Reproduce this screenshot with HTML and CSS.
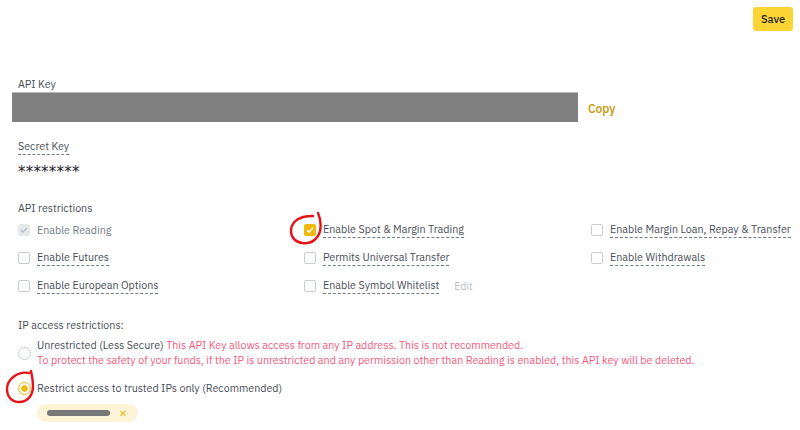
FILE: index.html
```html
<!DOCTYPE html>
<html lang="en">
<head>
    <meta charset="UTF-8">
    <meta name="viewport" content="width=device-width, initial-scale=1.0">
    <title>API Management</title>
    <link rel="stylesheet" href="styles.css">
</head>
<body>
<div class="page">

    <div class="topbar">
        <button class="save-btn">Save</button>
    </div>

    <div class="field-label api-label">API Key</div>
    <div class="key-row">
        <div class="key-bar"></div>
        <a class="copy-link">Copy</a>
    </div>

    <div class="field-label secret-label"><span class="dotted">Secret Key</span></div>
    <div class="secret-value">********</div>

    <div class="field-label section-title">API restrictions</div>
    <div class="perm-grid">
        <label class="perm disabled"><span class="box checked-grey"><svg viewBox="0 0 12 12"><path d="M3 6.2l2 2 4-4.4" /></svg></span>Enable Reading</label>
        <label class="perm"><span class="box checked"><svg viewBox="0 0 12 12"><path d="M3 6.2l2 2 4-4.4" /></svg></span><span class="dotted">Enable Spot &amp; Margin Trading</span></label>
        <label class="perm"><span class="box"></span><span class="dotted">Enable Margin Loan, Repay &amp; Transfer</span></label>

        <label class="perm"><span class="box"></span><span class="dotted">Enable Futures</span></label>
        <label class="perm"><span class="box"></span><span class="dotted">Permits Universal Transfer</span></label>
        <label class="perm"><span class="box"></span><span class="dotted">Enable Withdrawals</span></label>

        <label class="perm"><span class="box"></span><span class="dotted">Enable European Options</span></label>
        <label class="perm"><span class="box"></span><span class="dotted">Enable Symbol Whitelist</span><span class="edit">Edit</span></label>
    </div>

    <div class="field-label ip-title">IP access restrictions:</div>

    <div class="radio-row first">
        <span class="radio"></span>
        <div class="radio-text">
            <div>Unrestricted (Less Secure) <span class="warn">This API Key allows access from any IP address. This is not recommended.</span></div>
            <div class="warn">To protect the safety of your funds, if the IP is unrestricted and any permission other than Reading is enabled, this API key will be deleted.</div>
        </div>
    </div>

    <div class="radio-row second">
        <span class="radio on"></span>
        <div class="radio-text">Restrict access to trusted IPs only (Recommended)</div>
    </div>

    <div class="ip-chip">
        <span class="ip-hidden"></span>
        <span class="chip-x">&#x2715;</span>
    </div>

    <!-- hand drawn red marks -->
    <svg class="mark mark-check" viewBox="0 0 36 36">
        <path d="M30 3C33 10 34 20 30 26C26 32 20 34 14 33C7 32 3 27 3 21C3 14 8 9 15 7C19 6 22 6 25 6" />
    </svg>
    <svg class="mark mark-radio" viewBox="0 0 32 36">
        <path d="M25 4C14 2 3 10 3 20C3 28 8 33 15 33C24 33 29 26 29 17C29 11 28 7 27 2" />
    </svg>

</div>
</body>
</html>
```

FILE: styles.css
```css
body {
    margin: 0;
    font-family: "IBM Plex Sans", Roboto, "Liberation Sans", sans-serif;
    font-size: 10.7px;
    color: #474d57;
    background: #fff;
}
.page {
    position: relative;
    padding: 7px 7px 0 12px;
    height: 423px;
}
.topbar {
    display: flex;
    justify-content: flex-end;
}
.save-btn {
    width: 40px;
    height: 24px;
    border: none;
    border-radius: 3px;
    background: #fcd535;
    color: #1e2329;
    font-family: inherit;
    font-size: 11px;
    font-weight: 500;
    padding: 0;
}
.field-label {
    padding-left: 6px;
    line-height: 16px;
    color: #474d57;
}
.api-label { margin-top: 45px; }
.dotted {
    border-bottom: 1px dashed #707a8a;
    padding-bottom: 1px;
}
.key-row {
    display: flex;
    align-items: center;
}
.key-bar {
    width: 566px;
    height: 29px;
    background: #808080;
    border-top: 1px solid #b9b9b9;
}
.copy-link {
    margin-left: 10px;
    padding-top: 3px;
    color: #c99400;
    font-size: 12px;
    font-weight: 500;
}
.secret-label { margin-top: 16px; }
.secret-value {
    margin-top: 7px;
    padding-left: 6px;
    height: 16px;
    line-height: 22px;
    color: #1e2329;
    font-family: "DejaVu Sans", sans-serif;
    font-size: 15px;
    letter-spacing: 0.2px;
    overflow: visible;
}
.section-title { margin-top: 23px; }
.perm-grid {
    display: grid;
    grid-template-columns: 286px 287px 1fr;
    grid-auto-rows: 28px;
    padding-left: 6px;
}
.perm {
    display: flex;
    align-items: center;
    gap: 7px;
    color: #474d57;
    white-space: nowrap;
}
.perm.disabled { color: #707a8a; }
.box {
    width: 12px;
    height: 12px;
    box-sizing: border-box;
    border: 1px solid #c8ccd2;
    border-radius: 2px;
    display: flex;
    flex-shrink: 0;
}
.box svg {
    width: 12px;
    height: 12px;
    margin: -1px;
    fill: none;
    stroke: #fff;
    stroke-width: 1.3;
}
.box.checked {
    background: #f0b90b;
    border-color: #f0b90b;
}
.box.checked-grey {
    background: #e6e8ea;
    border-color: #e6e8ea;
}
.box.checked-grey svg { stroke: #b7bdc6; }
.edit {
    margin-left: 8px;
    color: #b7bdc6;
    font-size: 10.5px;
}
.ip-title { margin-top: 17px; }
.radio-row {
    display: flex;
    align-items: center;
    padding-left: 6px;
    gap: 6px;
}
.radio-row.first { margin-top: 5px; }
.radio-row.second { margin-top: 12px; }
.radio-text { line-height: 15px; }
.radio-row.second .radio-text { line-height: 16px; }
.radio {
    width: 13px;
    height: 13px;
    box-sizing: border-box;
    border: 1px solid #c8ccd2;
    border-radius: 50%;
    flex-shrink: 0;
}
.radio.on {
    border-color: #f0b90b;
    background: radial-gradient(circle, #f0b90b 0 3px, #fff 3.5px);
}
.warn { color: #f5597a; }
.ip-chip {
    margin: 8px 0 0 25px;
    width: 101px;
    height: 18px;
    border-radius: 9px;
    background: #fdf4d7;
    display: flex;
    align-items: center;
    padding-left: 10px;
    box-sizing: border-box;
}
.ip-hidden {
    width: 63px;
    height: 6px;
    border-radius: 3px;
    background: #777;
    filter: blur(0.6px);
}
.chip-x {
    margin-left: 9px;
    color: #f0b90b;
    font-size: 10px;
}
.mark {
    position: absolute;
    fill: none;
    stroke: #e5141b;
    stroke-width: 2.4;
    stroke-linecap: round;
}
.mark-check {
    left: 288px;
    top: 210px;
    width: 36px;
    height: 36px;
}
.mark-radio {
    left: 4px;
    top: 369px;
    width: 32px;
    height: 36px;
}
```
